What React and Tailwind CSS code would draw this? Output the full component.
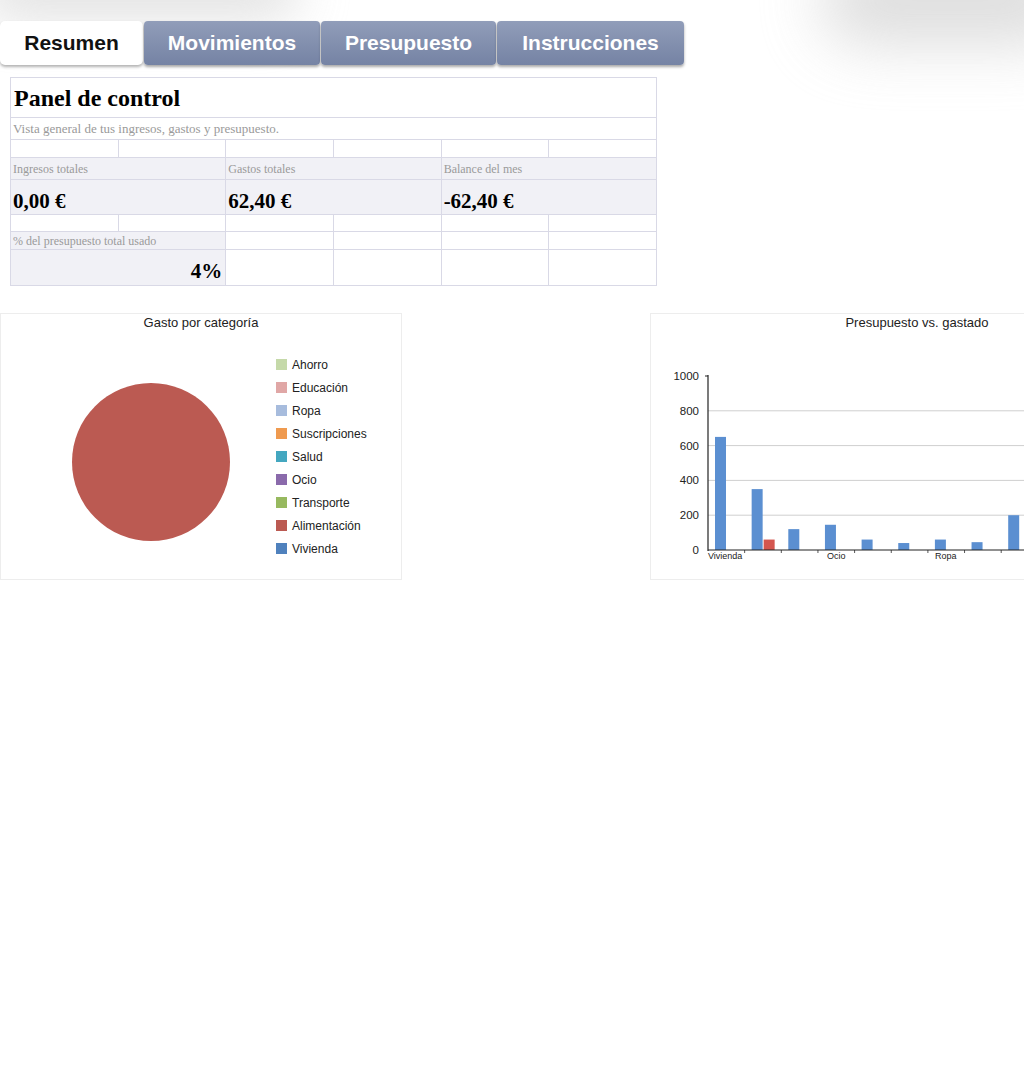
const tabs = [
  { label: 'Resumen', w: 'w-[143px]', active: true },
  { label: 'Movimientos', w: 'w-[176px]' },
  { label: 'Presupuesto', w: 'w-[175px]' },
  { label: 'Instrucciones', w: 'w-[187px]' },
];

const legend = [
  ['Ahorro', '#c5d9a9'],
  ['Educación', '#e0a7a6'],
  ['Ropa', '#a7bcdd'],
  ['Suscripciones', '#ef9a4f'],
  ['Salud', '#44a7c0'],
  ['Ocio', '#8a6aab'],
  ['Transporte', '#97b95f'],
  ['Alimentación', '#bb5a52'],
  ['Vivienda', '#4f81bd'],
];

// presupuesto (azul) y gastado (rojo) por categoría
const bars = [
  { b: 650, s: 0 },
  { b: 350, s: 60 },
  { b: 120, s: 0 },
  { b: 145, s: 0 },
  { b: 60, s: 0 },
  { b: 40, s: 0 },
  { b: 60, s: 0 },
  { b: 45, s: 0 },
  { b: 200, s: 0 },
  { b: 100, s: 0 },
  { b: 80, s: 0 },
];

const cell = 'border border-[#d9d9e6] p-0';
const shaded = 'bg-[#f1f1f6]';

const Tabs = () => (
  <div className="flex pt-[21px]">
    {tabs.map((t) => (
      <div
        key={t.label}
        className={
          t.active
            ? `${t.w} h-[44px] flex items-center justify-center rounded-[5px] bg-white text-[#111] shadow-[0_2px_3px_rgba(0,0,0,0.3)] text-[21px] font-bold mr-px`
            : `${t.w} h-[44px] flex items-center justify-center rounded-[4px] bg-linear-to-b from-[#919db9] to-[#7583a4] text-white shadow-[0_2px_3px_rgba(0,0,0,0.35)] text-[21px] font-bold mr-px`
        }
      >
        {t.label}
      </div>
    ))}
  </div>
);

const Dashboard = () => (
  <table className="ml-[10px] mt-[12px] w-[647px] table-fixed border-collapse font-['Liberation_Serif',serif]">
    <tbody>
      <tr className="h-[40px]">
        <td colSpan={6} className={`${cell} px-[3px] text-[24px] leading-[28px] font-bold text-black`}>
          Panel de control
        </td>
      </tr>
      <tr className="h-[22px]">
        <td colSpan={6} className={`${cell} px-[2px] text-[13px] leading-[16px] text-[#9a9a9a]`}>
          Vista general de tus ingresos, gastos y presupuesto.
        </td>
      </tr>
      <tr className="h-[18px]">
        {[0, 1, 2, 3, 4, 5].map((i) => (
          <td key={i} className={cell}></td>
        ))}
      </tr>
      <tr className="h-[22px]">
        {['Ingresos totales', 'Gastos totales', 'Balance del mes'].map((l) => (
          <td key={l} colSpan={2} className={`${cell} ${shaded} px-[2px] text-[12px] leading-[14px] text-[#9a9a9a]`}>
            {l}
          </td>
        ))}
      </tr>
      <tr className="h-[35px]">
        {['0,00 €', '62,40 €', '-62,40 €'].map((v) => (
          <td key={v} colSpan={2} className={`${cell} ${shaded} px-[2px] pt-[7px] text-[21px] leading-[24px] font-bold text-black`}>
            {v}
          </td>
        ))}
      </tr>
      <tr className="h-[17px]">
        {[0, 1, 2, 3, 4, 5].map((i) => (
          <td key={i} className={cell}></td>
        ))}
      </tr>
      <tr className="h-[18px]">
        <td colSpan={2} className={`${cell} ${shaded} px-[2px] text-[12px] leading-[14px] text-[#9a9a9a]`}>
          % del presupuesto total usado
        </td>
        {[0, 1, 2, 3].map((i) => (
          <td key={i} className={cell}></td>
        ))}
      </tr>
      <tr className="h-[36px]">
        <td colSpan={2} className={`${cell} ${shaded} px-[3px] text-right align-bottom text-[21px] leading-[28px] font-bold text-black`}>
          4%
        </td>
        {[0, 1, 2, 3].map((i) => (
          <td key={i} className={cell}></td>
        ))}
      </tr>
    </tbody>
  </table>
);

const PieChart = () => (
  <div className="w-[402px] h-[267px] shrink-0 border border-[#ededed] flex flex-col">
    <div className="text-center text-[13px] leading-[16px] pt-[1px] text-[#222]">Gasto por categoría</div>
    <div className="flex">
      <svg width="160" height="160" className="ml-[70px] mt-[51px] shrink-0">
        <circle cx="80" cy="80" r="79" fill="#bb5a52" />
      </svg>
      <div className="ml-[45px] mt-[22px] flex flex-col">
        {legend.map(([name, color]) => (
          <div key={name} className="flex items-center h-[23px]">
            <span className="w-[11px] h-[11px] mr-[5px]" style={{ backgroundColor: color }} />
            <span className="text-[12px] text-[#222]">{name}</span>
          </div>
        ))}
      </div>
    </div>
  </div>
);

const BarChart = () => {
  const y0 = 237;
  const k = 0.174;
  const step = 36.65;
  return (
    <div className="w-[534px] h-[267px] shrink-0 border border-[#ededed] flex flex-col">
      <div className="text-center text-[13px] leading-[16px] pt-[1px] text-[#222]">Presupuesto vs. gastado</div>
      <svg width="532" height="248" viewBox="0 18 532 248" className="block">
        {[200, 400, 600, 800].map((v) => (
          <line key={v} x1="57" x2="532" y1={y0 - v * k} y2={y0 - v * k} stroke="#cfcfcf" strokeWidth="1" />
        ))}
        {[0, 200, 400, 600, 800, 1000].map((v) => (
          <text key={v} x="48" y={y0 - v * k + 4} textAnchor="end" fontSize="11.5" fill="#222" fontFamily="Liberation Sans, Arial, sans-serif">
            {v}
          </text>
        ))}
        {bars.map((d, i) => {
          const x = 64 + i * step;
          return (
            <g key={i}>
              <rect x={x} y={y0 - d.b * k} width="11" height={d.b * k} fill="#5b8fd1" />
              {d.s > 0 && <rect x={x + 12} y={y0 - d.s * k} width="11" height={d.s * k} fill="#d4564f" />}
              <line x1={57 + (i + 1) * step} x2={57 + (i + 1) * step} y1={y0} y2={y0 + 3} stroke="#555" strokeWidth="1" />
            </g>
          );
        })}
        <line x1="57" x2="57" y1="62" y2={y0 + 1} stroke="#222" strokeWidth="1.2" />
        <line x1="54" x2="57" y1="63" y2="63" stroke="#222" strokeWidth="1" />
        <line x1="57" x2="532" y1={y0} y2={y0} stroke="#222" strokeWidth="1.2" />
        {[
          ['Vivienda', 57],
          ['Ocio', 176],
          ['Ropa', 284],
        ].map(([l, x]) => (
          <text key={l} x={x} y={y0 + 9} fontSize="9" fill="#222" fontFamily="Liberation Sans, Arial, sans-serif">
            {l}
          </text>
        ))}
      </svg>
    </div>
  );
};

export default function App() {
  return (
    <div className="relative w-[1024px] min-h-[1087px] overflow-hidden bg-white font-['Liberation_Sans',Arial,sans-serif]">
      {/* sombras difusas del borde superior */}
      <div className="absolute -top-[40px] left-[-20px] w-[320px] h-[60px] rounded-full bg-[#d6d6d6] blur-[25px] opacity-70 pointer-events-none" />
      <div className="absolute -top-[45px] left-[820px] w-[260px] h-[90px] rounded-full bg-[#d0d0d0] blur-[30px] opacity-70 pointer-events-none" />
      <div className="relative">
        <Tabs />
        <Dashboard />
        <div className="flex mt-[27px] gap-[248px]">
          <PieChart />
          <BarChart />
        </div>
      </div>
    </div>
  );
}
